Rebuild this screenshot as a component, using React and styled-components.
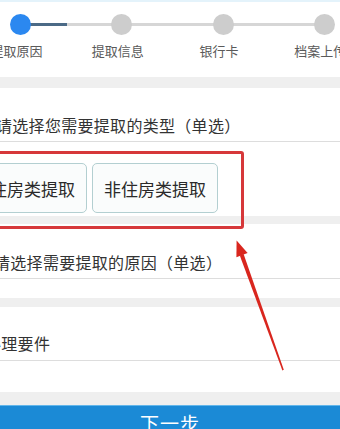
import React from 'react';
import styled, { createGlobalStyle } from 'styled-components';

const GlobalStyle = createGlobalStyle`
  html, body {
    margin: 0;
    padding: 0;
    background: #ffffff;
    overflow: hidden;
  }
  body {
    font-family: "Noto Sans CJK SC", "Noto Sans", sans-serif;
  }
`;

const Page = styled.div`
  position: relative;
  width: 340px;
  height: 429px;
  overflow: hidden;
  background: #ffffff;
`;

const TopStrip = styled.div`
  height: 2px;
  background: #e4f3fb;
`;

const Steps = styled.div`
  display: flex;
  width: 405px;
  height: 75px;
  margin-left: -30px;
  padding-top: 12px;
  box-sizing: border-box;
`;

const Step = styled.div`
  position: relative;
  flex: 1;
  display: flex;
  flex-direction: column;
  align-items: center;

  &::after {
    content: '';
    display: ${p => (p.$last ? 'none' : 'block')};
    position: absolute;
    top: 9px;
    left: 50%;
    width: 100%;
    height: 3px;
    background: ${p =>
      p.$progress
        ? `linear-gradient(to right, #4b6a86 0, #4b6a86 ${p.$progress}%, #d6d6d6 ${p.$progress}%)`
        : '#d6d6d6'};
    z-index: 0;
  }
`;

const Dot = styled.div`
  position: relative;
  z-index: 1;
  width: 21px;
  height: 21px;
  border-radius: 50%;
  background: ${p => (p.$active ? '#2b88f0' : '#cdcdcd')};
`;

const StepLabel = styled.div`
  margin-top: 8px;
  margin-right: 8px;
  font-size: 13px;
  line-height: 16px;
  color: #5a5a5a;
  white-space: nowrap;
`;

const Band = styled.div`
  height: ${p => p.$h}px;
  background: #efefef;
`;

const Section = styled.div`
  background: #ffffff;
`;

const Question = styled.div`
  padding: ${p => p.$top}px 0 ${p => p.$bottom}px;
  border-bottom: 1px solid #dddddd;
  font-size: 16px;
  line-height: 20px;
  letter-spacing: 0.3px;
  color: #333333;
  white-space: nowrap;

  span {
    display: inline-block;
    margin-left: ${p => p.$indent}px;
  }
`;

const Options = styled.div`
  display: flex;
  gap: 5px;
  margin-left: -22px;
  padding: 21px 0 3px;
`;

const Option = styled.div`
  height: 50px;
  padding: 0 11px;
  box-sizing: border-box;
  display: flex;
  align-items: center;
  border: 1px solid #b3cfd1;
  border-radius: 5px;
  background: #fafcfc;
  font-size: 17px;
  color: #2a2a2a;
  white-space: nowrap;
`;

const Filler = styled.div`
  height: ${p => p.$h}px;
`;

const NextButton = styled.div`
  height: 40px;
  box-sizing: border-box;
  border-top: 1px solid #62b6ea;
  background: #1b8ad6;
  color: #ffffff;
  font-size: 19px;
  line-height: 34px;
  text-align: center;
  letter-spacing: 1px;
`;

const RedBox = styled.div`
  position: absolute;
  left: -20px;
  top: 151px;
  width: 264px;
  height: 78px;
  box-sizing: border-box;
  border: 3px solid #d6383a;
  border-radius: 3px;
  pointer-events: none;
`;

const ArrowLayer = styled.svg`
  position: absolute;
  left: 0;
  top: 0;
  pointer-events: none;
`;

const steps = ['提取原因', '提取信息', '银行卡', '档案上传'];

export default function App() {
  return (
    <Page>
      <GlobalStyle />
      <TopStrip />
      <Steps>
        {steps.map((s, i) => (
          <Step key={s} $last={i === steps.length - 1} $progress={i === 0 ? 46 : 0}>
            <Dot $active={i === 0} />
            <StepLabel>{s}</StepLabel>
          </Step>
        ))}
      </Steps>
      <Band $h={11} />
      <Section>
        <Question $top={27} $bottom={6} $indent={-4}>
          <span>请选择您需要提取的类型（单选）</span>
        </Question>
        <Options>
          <Option>住房类提取</Option>
          <Option>非住房类提取</Option>
        </Options>
      </Section>
      <Band $h={8} />
      <Section>
        <Question $top={28} $bottom={6} $indent={-6}>
          <span>请选择需要提取的原因（单选）</span>
        </Question>
        <Filler $h={19} />
      </Section>
      <Band $h={9} />
      <Section>
        <Question $top={26} $bottom={7} $indent={-15}>
          <span>办理要件</span>
        </Question>
        <Filler $h={31} />
      </Section>
      <Band $h={13} />
      <NextButton>下一步</NextButton>

      <RedBox />
      <ArrowLayer width="340" height="429" viewBox="0 0 340 429">
        <polygon
          points="282.4,370.4 283.8,369.8 243.6,254 239.8,255.4"
          fill="#d9261e"
        />
        <polygon
          points="236.6,240.5 247.6,253 236.4,257.2"
          fill="#d9261e"
        />
      </ArrowLayer>
    </Page>
  );
}
